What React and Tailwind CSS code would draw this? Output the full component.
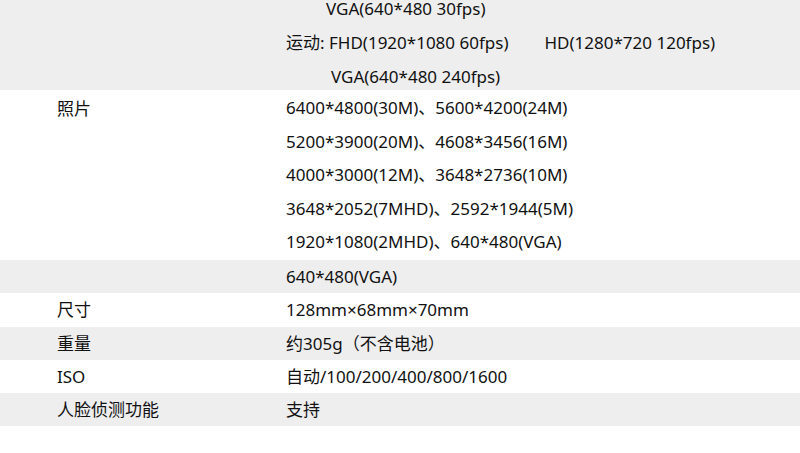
const rows = [
  { label: "尺寸", value: ["128mm×68mm×70mm"], shade: false, h: "h-[34px]" },
  { label: "重量", value: ["约305g（不含电池）"], shade: true, h: "h-[33px]" },
  { label: "ISO", value: ["自动/100/200/400/800/1600"], shade: false, h: "h-[33px]" },
  { label: "人脸侦测功能", value: ["支持"], shade: true, h: "h-[33px]" },
];

const photoSizes = [
  "6400*4800(30M)、5600*4200(24M)",
  "5200*3900(20M)、4608*3456(16M)",
  "4000*3000(12M)、3648*2736(10M)",
  "3648*2052(7MHD)、2592*1944(5M)",
  "1920*1080(2MHD)、640*480(VGA)",
];

function Row({ label, children, shade, className = "" }) {
  return (
    <div className={`flex overflow-hidden ${shade ? "bg-[#eeeeee]" : "bg-white"} ${className}`}>
      <div className="w-[286px] shrink-0 pl-[57px]">{label}</div>
      <div className="flex-1">{children}</div>
    </div>
  );
}

export default function App() {
  return (
    <div
      className="h-[453px] w-[800px] overflow-hidden bg-white text-[17px] leading-[33.5px] text-[#111]"
      style={{ fontFamily: '"Noto Sans", "Noto Sans CJK SC", sans-serif' }}
    >
      <Row shade className="h-[90px]">
        <div className="pl-[40px] leading-[18px]">VGA(640*480 30fps)</div>
        <div className="mt-[8px] flex">
          <span>运动: FHD(1920*1080 60fps)</span>
          <span className="ml-[36px]">HD(1280*720 120fps)</span>
        </div>
        <div className="pl-[45px]">VGA(640*480 240fps)</div>
      </Row>
      <Row label={<div className="pt-[1px]">照片</div>} className="h-[170px] pt-[1px]">
        {photoSizes.map((line) => (
          <div key={line}>{line}</div>
        ))}
      </Row>
      <Row shade className="h-[33px]">
        <div>640*480(VGA)</div>
      </Row>
      {rows.map((row) => (
        <Row key={row.label} label={row.label} shade={row.shade} className={row.h}>
          {row.value.map((v) => (
            <div key={v}>{v}</div>
          ))}
        </Row>
      ))}
    </div>
  );
}
